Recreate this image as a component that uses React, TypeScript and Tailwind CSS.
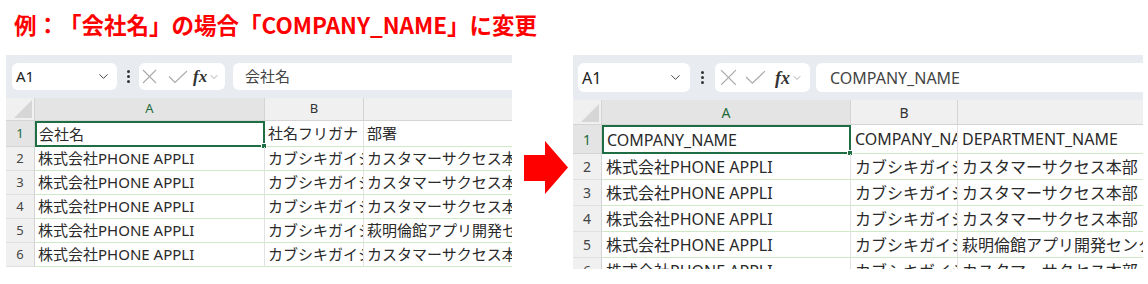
import React from 'react';
import { ChevronDown } from 'lucide-react';

type Row = { a: string; b: string; c: string };

const beforeRows: Row[] = [
  { a: '会社名', b: '社名フリガナ', c: '部署' },
  { a: '株式会社PHONE APPLI', b: 'カブシキガイシャフォンアプリ', c: 'カスタマーサクセス本部' },
  { a: '株式会社PHONE APPLI', b: 'カブシキガイシャフォンアプリ', c: 'カスタマーサクセス本部' },
  { a: '株式会社PHONE APPLI', b: 'カブシキガイシャフォンアプリ', c: 'カスタマーサクセス本部' },
  { a: '株式会社PHONE APPLI', b: 'カブシキガイシャフォンアプリ', c: '萩明倫館アプリ開発センター' },
  { a: '株式会社PHONE APPLI', b: 'カブシキガイシャフォンアプリ', c: 'カスタマーサクセス本部' },
];

const afterRows: Row[] = [
  { a: 'COMPANY_NAME', b: 'COMPANY_NAME_KANA', c: 'DEPARTMENT_NAME' },
  ...beforeRows.slice(1),
];

interface Size {
  panel: string;
  toolbar: string;
  nameBox: string;
  dots: string;
  fxBox: string;
  xIcon: string;
  checkIcon: string;
  fxText: string;
  formula: string;
  header: string;
  rowHead: string;
  colA: string;
  colB: string;
  firstRow: string;
  row: string;
  cell: string;
  num: string;
}

const small: Size = {
  panel: 'w-[506px] h-[213px]',
  toolbar: 'h-[43px] pt-[8px] pl-[6px]',
  nameBox: 'w-[105px] h-[27px] text-[15px] pl-[4px] pr-[6px]',
  dots: 'w-[22px]',
  fxBox: 'w-[86px] h-[27px]',
  xIcon: 'ml-[3px] w-[15px] h-[15px]',
  checkIcon: 'ml-[11px] w-[20px] h-[14px]',
  fxText: 'ml-[5px] text-[17px]',
  formula: 'ml-[8px] h-[27px] pl-[12px] text-[15px]',
  header: 'h-[23px] text-[13px]',
  rowHead: 'w-[29px]',
  colA: 'w-[230px]',
  colB: 'w-[99px]',
  firstRow: 'h-[26px]',
  row: 'h-[24px]',
  cell: 'text-[15px] pl-[3px]',
  num: 'text-[13px]',
};

const large: Size = {
  panel: 'w-[570px] h-[214px]',
  toolbar: 'h-[45px] pt-[8px] pl-[5px]',
  nameBox: 'w-[112px] h-[29px] text-[16px] pl-[4px] pr-[7px]',
  dots: 'w-[25px]',
  fxBox: 'w-[95px] h-[29px]',
  xIcon: 'ml-[5px] w-[17px] h-[17px]',
  checkIcon: 'ml-[8px] w-[21px] h-[15px]',
  fxText: 'ml-[9px] text-[18px]',
  formula: 'ml-[6px] h-[29px] pl-[14px] text-[16px]',
  header: 'h-[25px] text-[14px]',
  rowHead: 'w-[29px]',
  colA: 'w-[249px]',
  colB: 'w-[107px]',
  firstRow: 'h-[29px]',
  row: 'h-[26px]',
  cell: 'text-[16px] pl-[4px]',
  num: 'text-[14px]',
};

function Sheet({ size, rows, formula }: { size: Size; rows: Row[]; formula: string }) {
  return (
    <div className={`${size.panel} flex flex-col overflow-hidden bg-white shrink-0`}>
      {/* toolbar */}
      <div className={`${size.toolbar} flex items-start bg-[#e8ecf0] shrink-0`}>
        <div className={`${size.nameBox} flex items-center justify-between bg-white rounded-md text-[#222]`}>
          <span>A1</span>
          <ChevronDown size={15} strokeWidth={1.6} className="text-[#444]" />
        </div>
        <div className={`${size.dots} h-full flex flex-col items-center justify-center gap-[2px] pb-[8px]`}>
          <span className="w-[3px] h-[3px] rounded-full bg-[#333]" />
          <span className="w-[3px] h-[3px] rounded-full bg-[#333]" />
          <span className="w-[3px] h-[3px] rounded-full bg-[#333]" />
        </div>
        <div className={`${size.fxBox} flex items-center bg-white rounded-md`}>
          <svg viewBox="0 0 15 15" className={size.xIcon} fill="none" stroke="#a9a9a9" strokeWidth="1.1">
            <line x1="1" y1="1" x2="14" y2="14" />
            <line x1="14" y1="1" x2="1" y2="14" />
          </svg>
          <svg viewBox="0 0 20 14" className={size.checkIcon} fill="none" stroke="#a9a9a9" strokeWidth="1.1">
            <polyline points="1,6.5 7,12.5 19,1" />
          </svg>
          <span className={`${size.fxText} font-['Liberation_Serif',serif] italic font-bold text-[#333] leading-none`}>fx</span>
          <ChevronDown size={12} strokeWidth={1.4} className="text-[#888] ml-[1px]" />
        </div>
        <div className={`${size.formula} flex-1 flex items-center bg-white rounded-l-md text-[#444]`}>
          {formula}
        </div>
      </div>

      {/* column headers */}
      <div className={`${size.header} flex shrink-0 bg-[#f0f0f0] border-b border-[#d4d4d4]`}>
        <div className={`${size.rowHead} shrink-0 border-r border-[#d4d4d4] flex items-end justify-end`}>
          <svg width="18" height="18" viewBox="0 0 18 18" className="mb-[2px] mr-[2px]">
            <polygon points="18,0 18,18 0,18" fill="#d6d6d6" />
          </svg>
        </div>
        <div className={`${size.colA} shrink-0 bg-[#e4e4e4] border-r border-[#d4d4d4] flex items-center justify-center text-[#1e6b3c]`}>
          A
        </div>
        <div className={`${size.colB} shrink-0 border-r border-[#d4d4d4] flex items-center justify-center text-[#333]`}>
          B
        </div>
        <div className="flex-1" />
      </div>

      {/* rows */}
      {rows.map((r, i) => (
        <div key={i} className={`${i === 0 ? size.firstRow : size.row} flex shrink-0`}>
          <div
            className={`${size.rowHead} ${size.num} shrink-0 flex items-center justify-center border-r border-[#d4d4d4] border-b ${
              i === 0 ? 'bg-[#e4e4e4] text-[#1e6b3c] border-b-[#d4d4d4]' : 'bg-[#f0f0f0] text-[#444] border-b-[#e0e0e0]'
            }`}
          >
            {i + 1}
          </div>
          <div
            className={`${size.colA} ${size.cell} shrink-0 relative flex items-center whitespace-nowrap overflow-visible text-[#2a2a2a] ${
              i === 0 ? 'border-2 border-[#1f6e43]' : 'border-b border-[#cfe8c6] border-r border-r-[#e2e2e2]'
            }`}
          >
            <span className={i === 0 ? '-ml-[1px]' : ''}>{r.a}</span>
            {i === 0 && (
              <span className="absolute -right-[4px] -bottom-[4px] w-[6px] h-[6px] bg-[#1f6e43] border border-white" />
            )}
          </div>
          <div
            className={`${size.colB} ${size.cell} shrink-0 flex items-center whitespace-nowrap overflow-hidden text-[#2a2a2a] border-b border-[#cfe8c6] border-r border-r-[#e2e2e2]`}
          >
            {r.b}
          </div>
          <div className={`${size.cell} flex-1 flex items-center whitespace-nowrap overflow-hidden text-[#2a2a2a] border-b border-[#cfe8c6]`}>
            {r.c}
          </div>
        </div>
      ))}
    </div>
  );
}

export default function App() {
  return (
    <div className="w-[1148px] h-[284px] bg-white overflow-hidden font-['Noto_Sans','Noto_Sans_CJK_JP',sans-serif]">
      <h1 className="h-[55px] pl-[14px] pt-[9px] leading-[30px] text-[22.5px] font-bold text-[#ff0000] font-['Noto_Sans_CJK_JP',sans-serif] whitespace-nowrap [text-spacing-trim:space-all]">
        例：「会社名」の場合「COMPANY_NAME」に変更
      </h1>
      <div className="flex items-start">
        <div className="ml-[6px]">
          <Sheet size={small} rows={beforeRows} formula="会社名" />
        </div>
        <svg width="44" height="53" viewBox="0 0 44 53" className="ml-[12px] mt-[86px] shrink-0">
          <polygon points="0,14 21,14 21,0 44,26.5 21,53 21,40 0,40" fill="#ff0000" />
        </svg>
        <div className="ml-[5px]">
          <Sheet size={large} rows={afterRows} formula="COMPANY_NAME" />
        </div>
      </div>
    </div>
  );
}
